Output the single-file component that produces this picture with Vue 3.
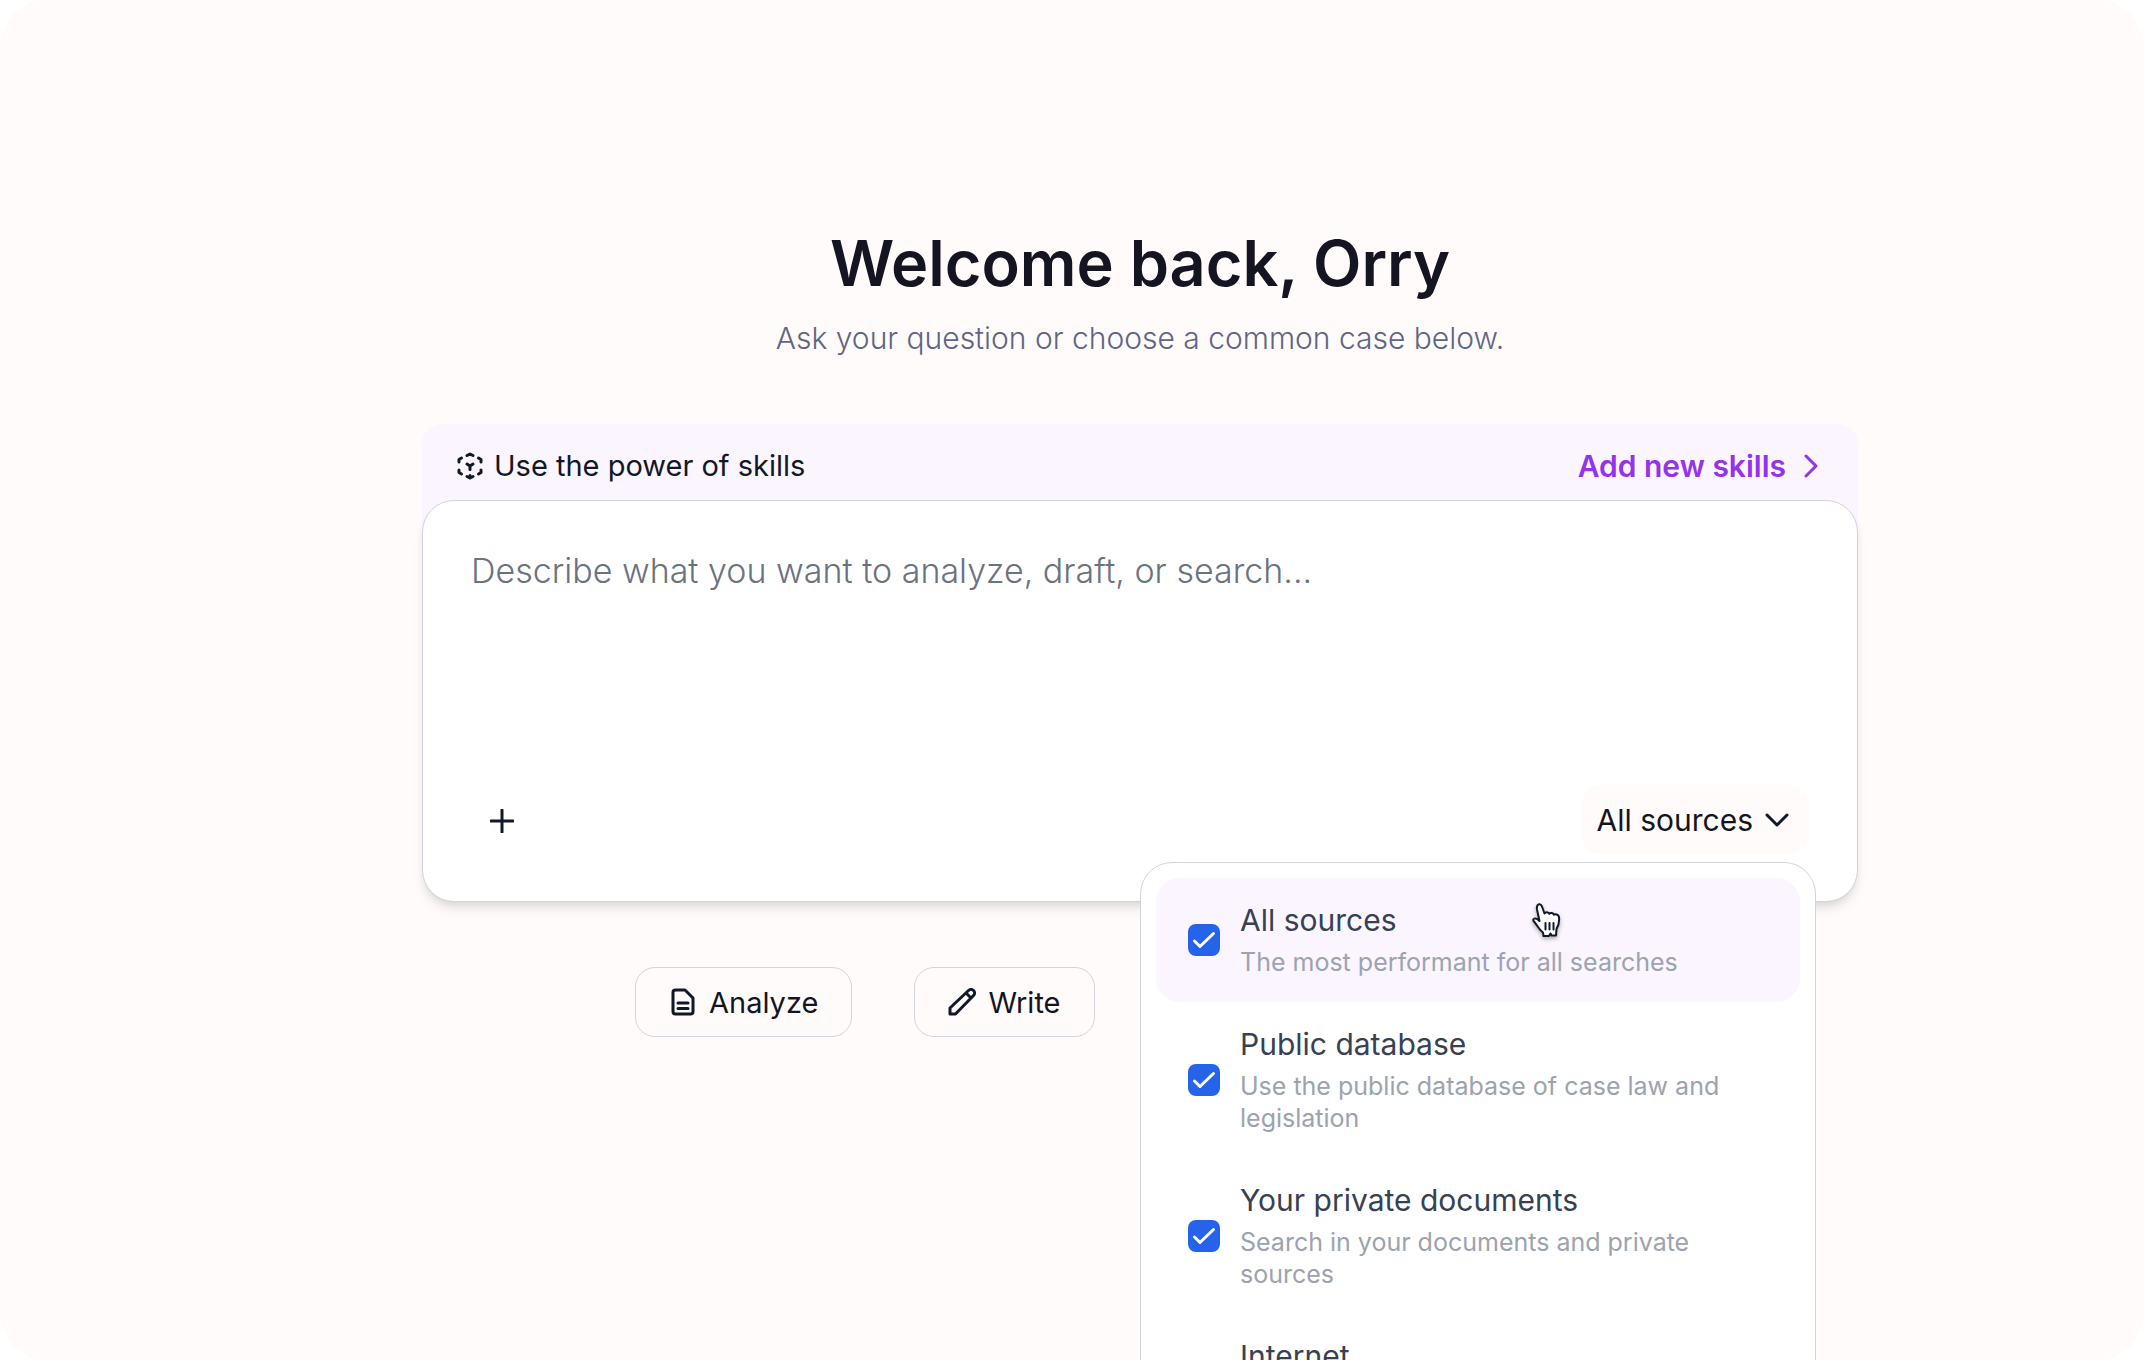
<template>
  <div class="page">
    <main class="content">
      <header class="welcome">
        <h1>Welcome back, Orry</h1>
        <p>Ask your question or choose a common case below.</p>
      </header>

      <section class="composer">
        <div class="skills">
          <span class="skills-label">
            <svg class="skills-icon" viewBox="0 0 28 28" aria-hidden="true">
              <path d="M11 3.5 14 2l3 1.500M5.500 6 3 7.500V10M22.500 6 25 7.500V10M3 18v2.500L5.500 22M25 18v2.500L22.500 22M11 24.500l3 1.500 3-1.500M14 23.500V26M11 12l3 2 3-2M14 14v3.500" />
            </svg>
            Use the power of skills
          </span>
          <a href="#" class="skills-link">
            Add new skills
            <svg class="skills-arrow" viewBox="0 0 14 24" aria-hidden="true">
              <path d="m2 2 10 10L2 22" />
            </svg>
          </a>
        </div>

        <form class="prompt" @submit.prevent>
          <textarea
            v-model="question"
            aria-label="Question"
            placeholder="Describe what you want to analyze, draft, or search..."
          ></textarea>
          <div class="prompt-actions">
            <button type="button" class="btn-add" aria-label="Add file">
              <svg viewBox="0 0 24 24" aria-hidden="true"><path d="M12 1v22M1 12h22" /></svg>
            </button>
            <div class="sources">
              <button type="button" class="btn-sources" :aria-expanded="open" @click="open = !open">
                All sources
                <svg viewBox="0 0 24 14" aria-hidden="true"><path d="m2 2 10 10L22 2" /></svg>
              </button>
              <div v-if="open" class="dropdown">
                <label
                  v-for="source in sources"
                  :key="source.title"
                  class="source"
                  :class="{ active: source.active }"
                >
                  <input v-model="source.checked" type="checkbox" />
                  <span class="source-text">
                    <span class="source-title">{{ source.title }}</span>
                    <span class="source-description">{{ source.description }}</span>
                  </span>
                </label>
                <svg class="pointer" viewBox="0 0 32 38" aria-hidden="true">
                  <path
                    class="hand"
                    d="M8.500 19 6 7.500C5 2 9.500.5 11 4.500l2.500 7c1-2 4-1.700 4.800.3 1.200-1.500 4-1 4.500 1 1.500-1.200 4.700-.5 5.200 2.200.5 4-.5 8.500-2.500 12l-.5 6.500h-4.500l-1-2-1.500 2.500h-5.500l-.5-3.500c-3.500-2-5.500-7-9-11C.500 17 4.500 14.500 8.500 19Z"
                  />
                  <path class="fingers" d="M14.500 21v6.500M18.500 21v6.500M22.500 21v6.500" />
                </svg>
              </div>
            </div>
          </div>
        </form>
      </section>

      <div class="cases">
        <button type="button" class="btn-case">
          <svg viewBox="0 0 28 28" aria-hidden="true">
            <path d="M4 4.500C4 3 5 2 6.500 2H16l8 8v13.500c0 1.500-1 2.500-2.500 2.500h-15C5 26 4 25 4 23.500ZM9 15h10M9 20.500h10" />
          </svg>
          Analyze
        </button>
        <button type="button" class="btn-case">
          <svg viewBox="0 0 28 28" aria-hidden="true">
            <path d="M2 26v-6L20.500 2.500a3.500 3.500 0 0 1 5 5L7.500 26ZM18 5l5 5" />
          </svg>
          Write
        </button>
      </div>
    </main>
  </div>
</template>

<script setup>
import { ref } from 'vue'

const question = ref('')
const open = ref(true)

const sources = ref([
  {
    title: 'All sources',
    description: 'The most performant for all searches',
    checked: true,
    active: true,
  },
  {
    title: 'Public database',
    description: 'Use the public database of case law and legislation',
    checked: true,
  },
  {
    title: 'Your private documents',
    description: 'Search in your documents and private sources',
    checked: true,
  },
  {
    title: 'Internet',
    description: 'Search the web',
    checked: true,
  },
])
</script>

<style>
body {
  background: white;
}
</style>

<style scoped>
* {
  box-sizing: border-box;
}

.page {
  height: 100vh;
  overflow: hidden;
  background: #fffbfa;
  border-radius: 48px;
  color: #151521;
  font-family: Inter, 'Noto Sans', sans-serif;
  font-size: 30px;
}

.content {
  padding: 223px 286px 0 422px;
}

button,
textarea {
  font: inherit;
  color: inherit;
}

button {
  border: none;
  background: none;
  cursor: pointer;
}

svg {
  flex: none;
  fill: none;
  stroke: #111827;
  stroke-width: 3;
  stroke-linecap: round;
  stroke-linejoin: round;
}

.welcome {
  text-align: center;
}

h1 {
  margin: 0;
  font-size: 63px;
  font-weight: 600;
  line-height: 80px;
}

.welcome p {
  margin: 13px 0 64px;
  color: #5f6685;
  font-weight: 300;
  line-height: 44px;
}

.skills {
  display: flex;
  justify-content: space-between;
  height: 124px;
  padding: 20px 40px 0 34px;
  background: #faf5ff;
  border-radius: 20px 20px 0 0;
  line-height: 44px;
}

.skills-label,
.skills-link {
  display: flex;
  align-items: center;
  height: 44px;
}

.skills-label {
  gap: 10px;
  color: #111827;
  font-size: 29px;
}

.skills-icon {
  width: 28px;
  height: 28px;
}

.skills-link {
  gap: 18px;
  color: #9333ea;
  font-weight: 600;
  text-decoration: none;
}

.skills-arrow {
  width: 14px;
  height: 24px;
  stroke: #9333ea;
}

.prompt {
  margin-top: -48px;
  padding: 46px 48px 45px;
  background: white;
  border: 1px solid #d1d5db;
  border-radius: 32px;
  box-shadow:
    0 8px 12px -2px rgba(0, 0, 0, 0.1),
    0 4px 8px -4px rgba(0, 0, 0, 0.1);
}

textarea {
  display: block;
  width: 100%;
  height: 239px;
  padding: 0;
  border: none;
  outline: none;
  resize: none;
  background: none;
  font-size: 34px;
  font-weight: 300;
  line-height: 48px;
}

textarea::placeholder {
  color: #6b7280;
  opacity: 1;
}

.prompt-actions {
  display: flex;
  justify-content: space-between;
}

.btn-add {
  display: flex;
  align-items: center;
  justify-content: center;
  width: 62px;
  height: 70px;
  padding: 0;
}

.btn-add svg {
  width: 24px;
  height: 24px;
}

.sources {
  position: relative;
}

.btn-sources {
  display: flex;
  align-items: center;
  gap: 12px;
  height: 68px;
  padding: 0 20px 0 16px;
  background: #fffbfa;
  border-radius: 20px;
}

.btn-sources svg {
  width: 24px;
  height: 14px;
}

.dropdown {
  position: absolute;
  top: 76px;
  right: -7px;
  width: 676px;
  padding: 15px;
  background: white;
  border: 1px solid #d1d5db;
  border-radius: 32px;
}

.source {
  display: flex;
  align-items: center;
  gap: 20px;
  padding: 24px 32px;
  border-radius: 24px;
  cursor: pointer;
}

.source.active {
  background: #faf5ff;
}

.source input {
  flex: none;
  appearance: none;
  width: 32px;
  height: 32px;
  margin: 0;
  border: 1px solid #d1d5db;
  border-radius: 8px;
}

.source input:checked {
  border: none;
  background: #2563eb
    url("data:image/svg+xml,%3Csvg xmlns='http://www.w3.org/2000/svg' viewBox='0 0 32 32' fill='none' stroke='white' stroke-width='3' stroke-linecap='round' stroke-linejoin='round'%3E%3Cpath d='m6.500 17 5.500 5.500L25.500 9.500'/%3E%3C/svg%3E");
}

.source-text {
  display: flex;
  flex-direction: column;
  gap: 8px;
}

.source-title {
  color: #374151;
  line-height: 36px;
}

.source-description {
  color: #9ca3af;
  font-size: 25px;
  line-height: 32px;
}

.pointer {
  position: absolute;
  top: 39px;
  left: 390px;
  width: 32px;
  height: 38px;
  filter: drop-shadow(0 2px 2px rgba(0, 0, 0, 0.3));
}

.hand {
  fill: white;
  stroke-width: 2;
}

.fingers {
  stroke-width: 2;
}

.cases {
  display: flex;
  gap: 62px;
  padding: 65px 0 0 213px;
}

.btn-case {
  display: flex;
  align-items: center;
  gap: 12px;
  height: 70px;
  padding: 0 33px;
  border: 1px solid #d1d5db;
  border-radius: 20px;
  font-size: 29px;
}

.btn-case svg {
  width: 28px;
  height: 28px;
}
</style>
